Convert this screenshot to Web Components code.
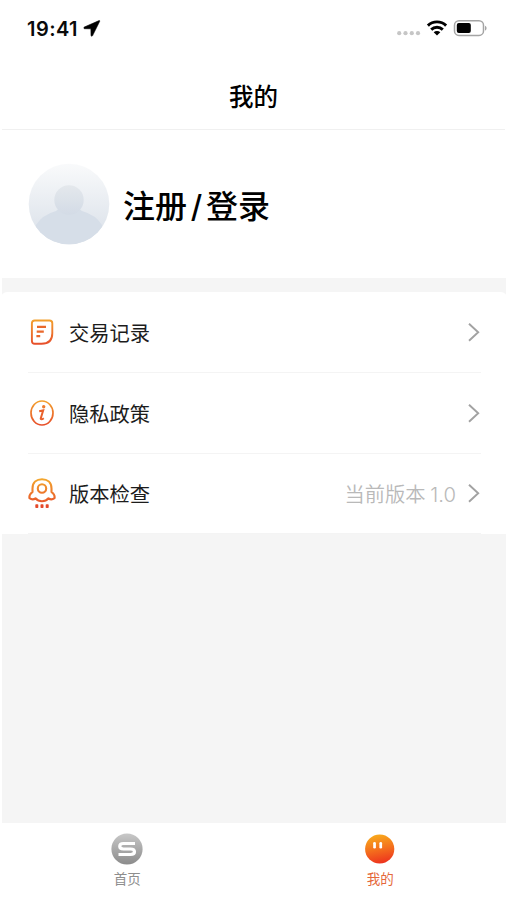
<!DOCTYPE html>
<html lang="zh-CN">
<head>
<meta charset="utf-8">
<title>我的</title>
<style>
html,body{margin:0;height:100%;background:#fff}
body{font-family:Inter,"Noto Sans CJK SC",sans-serif;color:#111}
</style>
</head>
<body>
<mine-page></mine-page>
<script>
function define(name, html) {
  const t = document.createElement('template');
  t.innerHTML = html;
  customElements.define(name, class extends HTMLElement {
    constructor() {
      super();
      this.attachShadow({ mode: 'open' }).append(t.content.cloneNode(true));
    }
  });
}

define('status-bar', `
<style>
:host{display:flex;height:62px;box-sizing:border-box;padding:0 19px 6px 27px;align-items:center;justify-content:space-between}
.l{display:flex;align-items:center;gap:5px}
.t{font-size:20px;font-weight:600;letter-spacing:.45px;color:#0a0a0a;line-height:24px;padding-top:1px}
svg{display:block}
</style>
<div class="l"><span class="t">19:41</span>
<svg width="18" height="18" viewBox="0 0 18 18"><path d="M16.100 1.600 1.400 8c-.9.4-.7 1.700.2 1.700l6.300.1.1 6.500c0 1 1.200 1.200 1.600.3L16.700 2.300c.2-.5-.1-.9-.6-.7Z" fill="#000" stroke="#000" stroke-width=".6"/></svg></div>
<svg width="92" height="20" viewBox="0 0 92 20">
<g fill="#c6c6c6"><circle cx="3.200" cy="15.200" r="2.100"/><circle cx="9.500" cy="15.200" r="2.100"/><circle cx="15.800" cy="15.200" r="2.100"/><circle cx="22" cy="15.200" r="2.100"/></g>
<g fill="none" stroke="#000" stroke-width="2.900"><path d="M31.900 7.600a13 13 0 0 1 18.200 0"/><path d="M35.200 11.600a8.300 8.300 0 0 1 11.600 0"/></g>
<path d="M37.700 14.300a4.600 4.600 0 0 1 6.600 0L41 17.400Z" fill="#000"/>
<rect x="58.500" y="2.800" width="29" height="14.600" rx="4.500" fill="none" stroke="#a4a4a4" stroke-width="1.500"/>
<rect x="60.800" y="5" width="14" height="10" rx="2" fill="#000"/><path d="M89 7.700c2.100.8 2.100 4 0 4.800Z" fill="#a4a4a4"/></svg>`);

define('nav-title', `
<style>:host{display:flex;height:68px;box-sizing:border-box;align-items:center;justify-content:center;border-bottom:1px solid #f0f0f0;font:500 24.500px/36px "Noto Sans CJK SC",sans-serif;color:#000;margin:0 2px}
</style><span><slot></slot></span>`);

define('user-card', `
<style>:host{display:flex;height:148px;box-sizing:border-box;align-items:center;padding:0 28px;gap:13px;font:500 32px/48px "Noto Sans CJK SC",sans-serif;color:#000}
svg{display:block}span{display:flex;padding-bottom:1px}i{font:500 31px/48px Inter,sans-serif;width:19px;text-align:center;padding-top:3px;height:45px}</style>
<svg width="82" height="82" viewBox="0 0 82 82"><defs><linearGradient id="a" x2="0" y2="1"><stop offset="0" stop-color="#f9fafb"/><stop offset="1" stop-color="#d8dfe8"/></linearGradient><linearGradient id="b" x2="0" y2="1"><stop offset="0" stop-color="#e4e8ec"/><stop offset="1" stop-color="#d3dbe6"/></linearGradient><clipPath id="c"><circle cx="41" cy="41" r="40.300"/></clipPath></defs>
<circle cx="41" cy="41" r="40.300" fill="url(#a)"/><g clip-path="url(#c)"><path d="M8 62Q14 52 28 48Q32 44 41 44Q50 44 54 48Q68 52 74 62V82H8Z" fill="#d6dee8"/><circle cx="41" cy="37" r="14.700" fill="url(#b)"/></g></svg>
<span><slot name="a"></slot><i>/</i><slot name="b"></slot></span>`);

define('menu-list', `
<style>:host{display:block;background:#fff;border-radius:6px 6px 0 0;height:242px}</style><slot></slot>`);

define('menu-row', `
<style>:host{display:flex;height:80.800px;box-sizing:border-box;margin:0 26px 0 27px;align-items:center;border-bottom:1px solid #f4f4f4;font:400 20.300px/30px "Noto Sans CJK SC",sans-serif;color:#1c1c1c}
.label{margin-left:13px;flex:1}.note{color:#b9b9b9;font-family:Inter,"Noto Sans CJK SC",sans-serif;font-weight:350;margin-right:12px;padding-top:3px;word-spacing:-1px}
svg{display:block}</style>
<slot name="icon"></slot><span class="label"><slot></slot></span><span class="note"><slot name="note"></slot></span>
<svg width="13" height="20" viewBox="0 0 13 20"><path d="M1 1.700 10.200 10.200 1 18.700" fill="none" stroke="#a2a2a2" stroke-width="1.900"/></svg>`);

const GRAD = '<defs><linearGradient id="g" gradientUnits="userSpaceOnUse" x1="0" y1="1" x2="0" y2="30"><stop offset="0" stop-color="#f4aa2e"/><stop offset="1" stop-color="#e6482a"/></linearGradient></defs>';
const iconStyle = '<style>:host{display:block}svg{display:block}</style>';
define('icon-record', iconStyle + `<svg width="28" height="32" viewBox="0 0 28 32">${GRAD}<g fill="none" stroke="url(#g)" stroke-width="1.900"><path d="M6.700 4.500H21.500Q24.300 4.500 24.300 7.300V17.200Q24.300 27.800 13.500 27.800H6.700Q3.900 27.800 3.900 25V7.300Q3.900 4.500 6.700 4.500Z"/></g><path d="M9 10.900H18M8.700 15.600H15.800M8.400 20.200H12.200" fill="none" stroke="#e9682c" stroke-width="2.300"/></svg>`);
define('icon-info', iconStyle + `<svg width="28" height="32" viewBox="0 0 28 32">${GRAD}<ellipse cx="14" cy="16" rx="11" ry="12" fill="none" stroke="url(#g)" stroke-width="1.700"/><circle cx="15.700" cy="9.700" r="1.700" fill="#ee7a2c"/><path d="M11.200 14.200 15.200 13.400 12.700 21.500Q12.800 23.300 15.800 21.200" fill="none" stroke="#e9602b" stroke-width="2"/></svg>`);
define('icon-rocket', iconStyle + `<svg width="28" height="32" viewBox="0 0 28 32">${GRAD}<g fill="none" stroke="url(#g)" stroke-width="2.100" stroke-linejoin="round"><path d="M4.500 15V11.500C4.500 5.500 8.600 2.200 14 2.200S23.500 5.500 23.500 11.500V15C25.500 16.500 27.100 18.500 26.500 21.200Q23.400 23.400 20.500 21.300Q18 24.200 14 24.200T7.500 21.300Q4.600 23.400 1.500 21.200C.9 18.500 2.500 16.500 4.500 15Z"/><circle cx="14" cy="11.500" r="4.200"/></g><g fill="#e5492a"><rect x="7.300" y="27.200" width="3" height="3.900" rx=".8"/><rect x="12.500" y="27.200" width="3" height="3.900" rx=".8"/><rect x="17.700" y="27.200" width="3" height="3.900" rx=".8"/></g></svg>`);

define('tab-bar', `<style>:host{display:grid;grid-template-columns:1fr 1fr;height:77px;background:#fff;border-radius:2px}</style><slot></slot>`);
define('tab-item', `
<style>:host{display:flex;flex-direction:column;align-items:center;padding-top:10px;gap:3px;font:400 13.500px/20px "Noto Sans CJK SC",sans-serif;color:#8e8e8e}
:host([active]){color:#e5683a}:host(:not([active])){padding-left:1px}</style><slot name="icon"></slot><span><slot></slot></span>`);
define('icon-home', iconStyle + `<svg width="32" height="32" viewBox="0 0 32 32"><defs><linearGradient id="g" x2="0" y2="1"><stop offset="0" stop-color="#c8c8c8"/><stop offset="1" stop-color="#8b8b8b"/></linearGradient></defs><circle cx="16" cy="16" r="15.600" fill="url(#g)"/><path d="M24 10.500H12.500C7.500 10.500 7.500 16 12.500 16H19.500C24.800 16 24.800 21.500 19.500 21.500H7.500" fill="none" stroke="#fff" stroke-width="3.200"/></svg>`);
define('icon-face', iconStyle + `<svg width="32" height="32" viewBox="0 0 32 32"><defs><linearGradient id="g" x1=".4" x2=".6" y2="1"><stop offset="0" stop-color="#f8aa1c"/><stop offset=".5" stop-color="#f4701d"/><stop offset="1" stop-color="#ed311e"/></linearGradient></defs><circle cx="15.700" cy="16" r="14.600" fill="url(#g)"/><rect x="9.200" y="9" width="2.700" height="6.500" rx="1.300" fill="#fff"/><rect x="15.400" y="9" width="2.700" height="6.500" rx="1.300" fill="#fff"/></svg>`);

define('mine-page', `
<style>:host{display:flex;flex-direction:column;height:900px;background:#fff}
main{flex:1;background:#f5f5f5;margin:0 1px 0 2px;padding-top:14px}
menu-list{margin:0 -1px}</style>
<status-bar></status-bar>
<nav-title>我的</nav-title>
<user-card><span slot="a">注册</span><span slot="b">登录</span></user-card>
<main><menu-list>
<menu-row><icon-record slot="icon"></icon-record>交易记录</menu-row>
<menu-row><icon-info slot="icon"></icon-info>隐私政策</menu-row>
<menu-row><icon-rocket slot="icon"></icon-rocket>版本检查<span slot="note">当前版本 1.0</span></menu-row>
</menu-list></main>
<tab-bar><tab-item><icon-home slot="icon"></icon-home>首页</tab-item><tab-item active><icon-face slot="icon"></icon-face>我的</tab-item></tab-bar>`);
</script>
</body>
</html>
